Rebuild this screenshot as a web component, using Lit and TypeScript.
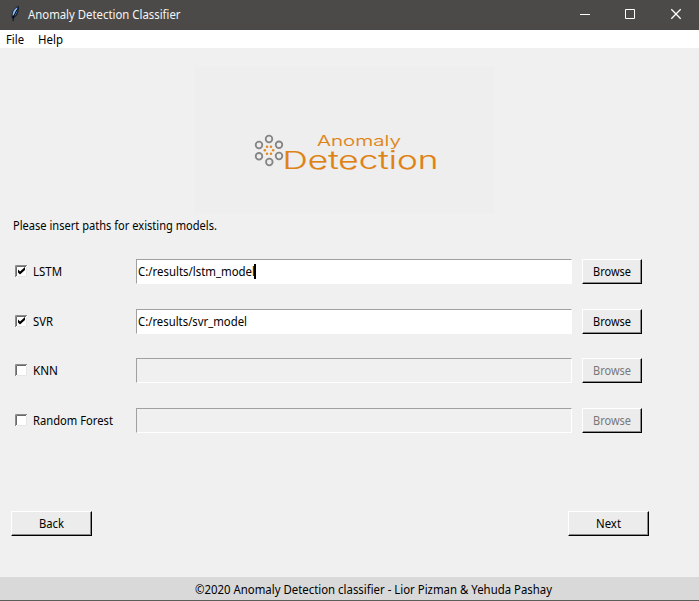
import { LitElement, html, css, svg, nothing } from "lit";
import { customElement, property } from "lit/decorators.js";

// One line of UI text fitted to a given advance width.
@customElement("ui-text")
class UiText extends LitElement {
  @property() text = "";
  @property({ type: Number }) w = 50;
  static styles = css`
    :host { display: block; height: 16px; flex: none; }
    svg { display: block; overflow: visible; }
    text { font: 12.3px "Noto Sans", "Open Sans", sans-serif; fill: currentColor; }
  `;
  render() {
    return html`<svg width=${this.w} height="16">
      <text x="0" y="12" textLength=${this.w} lengthAdjust="spacingAndGlyphs">${this.text}</text>
    </svg>`;
  }
}

@customElement("tk-button")
class TkButton extends LitElement {
  @property() label = "";
  @property({ type: Number }) w = 38;
  @property({ type: Boolean, reflect: true }) disabled = false;
  static styles = css`
    :host { display: block; width: 60px; height: 25px; flex: none; }
    :host([disabled]) { color: #787878; }
    .face {
      box-sizing: border-box; width: 100%; height: 100%;
      display: flex; align-items: center; justify-content: center;
      border: 1px solid; border-color: #fff #000 #000 #fff;
      box-shadow: inset -1px -1px #8a8a8a; background: #ececec;
    }
  `;
  render() {
    return html`<div class="face"><ui-text .text=${this.label} .w=${this.w}></ui-text></div>`;
  }
}

@customElement("tk-check")
class TkCheck extends LitElement {
  @property({ type: Boolean }) checked = false;
  static styles = css`
    :host { display: block; width: 12px; height: 12px; flex: none; margin-bottom: 1px; }
    svg { display: block; }
  `;
  render() {
    return html`<svg width="12" height="12" viewBox="0 0 12 12">
      <rect width="12" height="12" fill="#fff"/>
      <path d="M.5 12V.5H12" fill="none" stroke="#8c8c8c"/>
      <path d="M1.5 11V1.5H11" fill="none" stroke="#696969"/>
      <path d="M2 11.5H11.5V2" fill="none" stroke="#e6e6e6"/>
      ${this.checked
        ? svg`<path d="M3 4.6L5 6.6L10 2.1V5L5 9.5L3 7.5Z" fill="#000"/>`
        : nothing}
    </svg>`;
  }
}

const MODELS = [
  { name: "LSTM", w: 29, path: "C:/results/lstm_model", pathW: 117, on: true, caret: true },
  { name: "SVR", w: 20, path: "C:/results/svr_model", pathW: 109, on: true, caret: false },
  { name: "KNN", w: 25, path: "", pathW: 0, on: false, caret: false },
  { name: "Random Forest", w: 80, path: "", pathW: 0, on: false, caret: false },
];

const OUTER = [[29, 9.5], [39, 15.3], [39, 26.5], [29.3, 32.5], [19, 26.8], [19, 15.5]];
const INNER = [[27, 17.2], [31, 17.2], [33.2, 20.7], [31, 24.2], [27, 24.2], [24.8, 20.7]];

@customElement("app-root")
class AppRoot extends LitElement {
  static styles = css`
    :host {
      display: flex; flex-direction: column; box-sizing: border-box;
      width: 699px; height: 601px; overflow: hidden;
      background: #f0f0f0; color: #000; border-bottom: 1px solid #5c5c5b;
    }
    .title { flex: none; height: 30px; box-sizing: border-box; display: flex; background: #4b4a48; color: #f5f5f5; }
    .feather { flex: none; width: 28px; height: 30px; }
    .title ui-text { margin-top: 7px; }
    .controls { margin-left: auto; flex: none; }
    .menu { flex: none; height: 18px; display: flex; gap: 14px; padding: 0 6px; background: #fff; }
    .menu ui-text { margin-top: 2px; }
    .logo { flex: none; width: 299px; height: 146px; margin: 19px 0 0 195px; background: #eee; }
    .logo svg { display: block; }
    .brand { font-family: Inter, sans-serif; font-weight: 300; fill: #df8214; stroke: #df8214; stroke-width: .15px; }
    .small { font-size: 14.7px; }
    .large { font-size: 24.5px; }
    .message { margin: 5px 0 0 13px; }
    .rows { margin-top: 25px; display: grid; grid-template-rows: 50px 49px 50px 25px; flex: none; }
    .row { height: 25px; display: flex; align-items: center; padding-left: 15px; }
    .name { width: 103px; padding-left: 6px; flex: none; }
    .field {
      box-sizing: border-box; width: 436px; height: 25px; margin-right: 10px; flex: none;
      display: flex; align-items: center; padding-left: 1px;
      border: 1px solid; border-color: #a0a0a0 #fff #fff #a0a0a0;
    }
    .filled { background: #fff; }
    .caret { width: 2px; height: 15px; margin-left: -1px; background: #000; }
    .nav { display: flex; justify-content: space-between; margin: 78px 50px 0 11px; flex: none; }
    .nav tk-button { width: 81px; }
    .footer { margin-top: auto; height: 23px; flex: none; background: #d9d9d9; display: flex; padding-left: 195px; }
    .footer ui-text { margin-top: 5px; }
  `;
  render() {
    return html`
      <div class="title">
        <svg class="feather" viewBox="0 0 28 30">
          <path d="M12 18.5C10.6 14 13 8.5 18.6 5.8C19.6 10 17.6 16.2 13.8 18Z" fill="#101a2c"/>
          <path d="M12.7 15.8C12.2 12 14.4 8.8 17.4 7.2C17.4 9.5 16 12 13.6 15.5Z" fill="#8fbdf0"/>
          <path d="M14.2 16.6C15.8 15.2 17.2 12.6 17.7 9.6L15.2 13.4Z" fill="#4f80c4"/>
          <path d="M13 21.2L13.6 16.5L16.8 9.8" stroke="#07080c" stroke-width=".9" fill="none"/>
        </svg>
        <ui-text text="Anomaly Detection Classifier" w="152.5"></ui-text>
        <svg class="controls" width="138" height="30" viewBox="0 0 138 30" fill="none" stroke="#fff">
          <path d="M19 14.5H29M64.5 9.5H73.5V18.5H64.5Z"/>
          <path d="M110.3 9.3L119.7 18.7M119.7 9.3L110.3 18.7" stroke-width="1.3"/>
        </svg>
      </div>
      <div class="menu"><ui-text text="File" w="18"></ui-text><ui-text text="Help" w="25"></ui-text></div>
      <div class="logo">
        <svg width="299" height="146" viewBox="0 0 299 146">
          <g transform="translate(45 62.5)">
            ${OUTER.map(([x, y]) => svg`<circle cx=${x} cy=${y} r="3.3" fill="none" stroke="#858585" stroke-width="1.8"/>`)}
            ${INNER.map(([x, y]) => svg`<circle cx=${x} cy=${y} r="1.25" fill="#e08a20"/>`)}
          </g>
          <text class="brand small" x="122" y="79" textLength="84" lengthAdjust="spacingAndGlyphs">Anomaly</text>
          <text class="brand large" x="87.5" y="102" textLength="156" lengthAdjust="spacingAndGlyphs">Detection</text>
        </svg>
      </div>
      <ui-text class="message" text="Please insert paths for existing models." w="204"></ui-text>
      <div class="rows">
        ${MODELS.map((m) => html`
          <div class="row">
            <tk-check .checked=${m.on}></tk-check>
            <div class="name"><ui-text .text=${m.name} .w=${m.w}></ui-text></div>
            <div class="field ${m.on ? "filled" : ""}">
              ${m.path ? html`<ui-text .text=${m.path} .w=${m.pathW}></ui-text>` : nothing}
              ${m.caret ? html`<div class="caret"></div>` : nothing}
            </div>
            <tk-button label="Browse" .disabled=${!m.on}></tk-button>
          </div>`)}
      </div>
      <div class="nav"><tk-button label="Back" w="25"></tk-button><tk-button label="Next" w="25"></tk-button></div>
      <div class="footer"><ui-text text="©2020 Anomaly Detection classifier - Lior Pizman &amp; Yehuda Pashay" w="357"></ui-text></div>
    `;
  }
}
